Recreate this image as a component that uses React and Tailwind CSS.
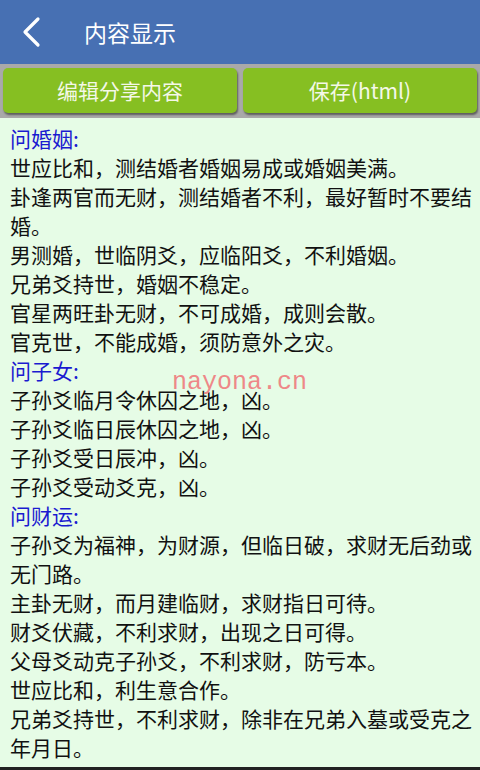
import React from "react";

const sections = [
  {
    title: "问婚姻:",
    lines: [
      "世应比和，测结婚者婚姻易成或婚姻美满。",
      "卦逢两官而无财，测结婚者不利，最好暂时不要结婚。",
      "男测婚，世临阴爻，应临阳爻，不利婚姻。",
      "兄弟爻持世，婚姻不稳定。",
      "官星两旺卦无财，不可成婚，成则会散。",
      "官克世，不能成婚，须防意外之灾。",
    ],
  },
  {
    title: "问子女:",
    lines: [
      "子孙爻临月令休囚之地，凶。",
      "子孙爻临日辰休囚之地，凶。",
      "子孙爻受日辰冲，凶。",
      "子孙爻受动爻克，凶。",
    ],
  },
  {
    title: "问财运:",
    lines: [
      "子孙爻为福神，为财源，但临日破，求财无后劲或无门路。",
      "主卦无财，而月建临财，求财指日可待。",
      "财爻伏藏，不利求财，出现之日可得。",
      "父母爻动克子孙爻，不利求财，防亏本。",
      "世应比和，利生意合作。",
      "兄弟爻持世，不利求财，除非在兄弟入墓或受克之年月日。",
    ],
  },
];

const App = () => {
  return (
    <div
      className="w-[480px] h-[770px] overflow-hidden flex flex-col bg-[#e6fce6]"
      style={{ fontFamily: '"Noto Sans CJK SC", "Noto Sans", sans-serif' }}
    >
      {/* Header */}
      <div className="h-[64px] bg-[#4770b3] flex items-center shrink-0">
        <svg width="60" height="64" viewBox="0 0 60 64" className="shrink-0">
          <path d="M38 19 L25 32 L38 45" fill="none" stroke="#ffffff" strokeWidth="3.2" strokeLinecap="round" strokeLinejoin="round" />
        </svg>
        <span className="ml-[24px] text-white text-[23px]">内容显示</span>
      </div>

      {/* Buttons */}
      <div className="h-[54px] bg-[#a9a9a9] flex gap-[6px] px-[3px] pt-[4px] pb-[5px] shrink-0">
        <button className="flex-1 rounded-[5px] bg-[#86bf22] text-[#f4f8e8] text-[21px] shadow-[1px_2px_2px_rgba(0,0,0,0.45)]">
          编辑分享内容
        </button>
        <button className="flex-1 rounded-[5px] bg-[#86bf22] text-[#f4f8e8] text-[21px] shadow-[1px_2px_2px_rgba(0,0,0,0.45)]">
          保存(html)
        </button>
      </div>

      {/* Content */}
      <div className="relative flex-1 pl-[10px] pr-[4px] pt-[6px] text-[21px] leading-[29px] text-[#111]">
        {sections.map((s) => (
          <div key={s.title}>
            <div className="text-[#1a1ad0]">{s.title}</div>
            {s.lines.map((l) => (
              <div key={l}>{l}</div>
            ))}
          </div>
        ))}
        <div
          className="absolute left-[172px] top-[250px] text-[25px] text-[#ee8888]"
          style={{ fontFamily: '"Liberation Mono", monospace' }}
        >
          nayona.cn
        </div>
      </div>
      <div className="h-[3px] bg-[#222] shrink-0" />
    </div>
  );
};

export default App;
